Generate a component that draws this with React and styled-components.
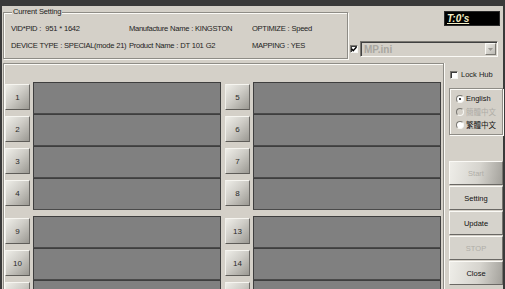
import styled, { createGlobalStyle } from "styled-components";

/** Global page reset */

const GlobalStyle = createGlobalStyle`
  html, body {
    margin: 0;
    padding: 0;
    background: #3a3a3a;
    overflow: hidden;
  }
  body {
    width: 505px;
    height: 289px;
    font-family: "Liberation Sans", Arial, sans-serif;
  }
`;

/** Window frame */

const Screen = styled.div`
  width: 505px;
  height: 289px;
  box-sizing: border-box;
  padding: 6px 2px 0 2px;
  background: #3a3a3a;
  overflow: hidden;
`;

const Dialog = styled.div`
  height: 100%;
  box-sizing: border-box;
  padding: 1px 0 0 1px;
  background: #d4d0c8;
  display: flex;
  flex-direction: column;
`;

const TopRow = styled.div`
  display: flex;
`;

const GroupBox = styled.fieldset`
  margin: 0;
  box-sizing: border-box;
  border: 1px solid #8e8c86;
  box-shadow: 1px 1px 0 #fbfaf6, inset 1px 1px 0 #fbfaf6;
  min-width: 0;
`;

const Legend = styled.legend`
  position: relative;
  margin-left: 1px;
  padding: 0 1px;
  font-size: 7.5px;
  letter-spacing: -0.15px;
  line-height: 10px;
  color: #222;
  background: #d4d0c8;
`;

const SettingBox = styled(GroupBox)`
  width: 345px;
  height: 52px;
  padding: 0 0 0 7px;
`;

const InfoGrid = styled.div`
  display: grid;
  grid-template-columns: 118px 123px 1fr;
  grid-auto-rows: 17px;
  align-items: center;
  margin-top: 3px;
  font-size: 7.6px;
  letter-spacing: -0.3px;
  word-spacing: 0.3px;
  color: #222;
  white-space: nowrap;
`;

const TopRight = styled.div`
  flex: 1;
  display: flex;
  flex-direction: column;
  align-items: flex-end;
`;

const Timer = styled.div`
  margin: 4px 3px 0 0;
  width: 56px;
  height: 15px;
  box-sizing: border-box;
  padding-left: 2px;
  background: #000;
  border: 1px solid #2a2a2a;
  color: #f4f0c8;
  font-size: 10px;
  font-style: italic;
  font-weight: bold;
  line-height: 13px;
  text-decoration: underline;
`;

const ComboRow = styled.div`
  margin: 15px 5px 0 0;
  display: flex;
  align-items: center;
  gap: 2px;
`;

const CheckBox = styled.span`
  width: 8px;
  height: 8px;
  box-sizing: border-box;
  display: flex;
  align-items: center;
  justify-content: center;
  background: #fff;
  border: 1px solid;
  border-color: #7a7872 #f6f6f2 #f6f6f2 #7a7872;
  box-shadow: inset 1px 1px 0 #3c3c3c;
  flex-shrink: 0;
`;

const Combo = styled.div`
  width: 138px;
  height: 16px;
  box-sizing: border-box;
  display: flex;
  align-items: center;
  justify-content: space-between;
  padding: 0 1px 0 3px;
  border: 1px solid;
  border-color: #7a7872 #fbfaf6 #fbfaf6 #7a7872;
  box-shadow: inset 1px 1px 0 #404040;
  background: #d4d0c8;
  color: #a8a6a0;
  font-size: 10px;
  font-weight: bold;
`;

const ComboArrow = styled.span`
  width: 11px;
  height: 12px;
  box-sizing: border-box;
  display: flex;
  align-items: center;
  justify-content: center;
  border: 1px solid;
  border-color: #fbfaf6 #7a7872 #7a7872 #fbfaf6;
  background: linear-gradient(135deg, #eceae4, #bcbab4);
`;

/** Main area */

const MainRow = styled.div`
  flex: 1;
  display: flex;
  margin-top: 4px;
  min-height: 0;
`;

const PortBox = styled.div`
  width: 441px;
  box-sizing: border-box;
  border: 1px solid #8e8c86;
  border-bottom: none;
  box-shadow: inset 1px 1px 0 #fbfaf6, 1px 0 0 #fbfaf6;
  padding: 18px 1px 0 1px;
  display: flex;
  flex-direction: column;
  gap: 6px;
`;

const Block = styled.div`
  display: flex;
  gap: 4px;
`;

const PortColumn = styled.div`
  display: flex;
  flex-direction: column;
`;

const Port = styled.div`
  height: 32px;
  display: flex;
  align-items: flex-start;
  gap: 3px;
`;

const PortButton = styled.div`
  margin-top: 2px;
  width: 25px;
  height: 26px;
  box-sizing: border-box;
  display: flex;
  align-items: center;
  justify-content: center;
  border: 1px solid;
  border-color: #f6f5f0 #6c6a66 #5e5c58 #f0efea;
  background: linear-gradient(135deg, #eeede8 0%, #cfcdc7 45%, #9a9892 100%);
  color: #2a2a2a;
  font-size: 8px;
`;

const StatusBar = styled.div`
  width: 188px;
  height: 32px;
  box-sizing: border-box;
  border: 1px solid #3e3e3e;
  border-bottom-color: #4a4a4a;
  background: #808080;
`;

const SideColumn = styled.div`
  width: 54px;
  margin-left: 5px;
  display: flex;
  flex-direction: column;
`;

const CheckRow = styled.label`
  margin: 7px 0 0 1px;
  display: flex;
  align-items: center;
  gap: 3px;
  font-size: 7.5px;
  color: #222;
`;

const LangBox = styled.div`
  margin-top: 9px;
  height: 47px;
  box-sizing: border-box;
  border: 1px solid #8e8c86;
  box-shadow: inset 1px 1px 0 #fbfaf6, 1px 1px 0 #fbfaf6;
  padding: 3px 0 0 6px;
  display: flex;
  flex-direction: column;
`;

const RadioRow = styled.div`
  height: 13px;
  display: flex;
  align-items: center;
  gap: 2px;
  font-family: "Liberation Sans", "Noto Sans CJK TC", sans-serif;
  font-size: 7.5px;
  color: ${(p) => (p.disabled ? "#aeaca6" : "#111")};
`;

const Radio = styled.span`
  position: relative;
  width: 8px;
  height: 8px;
  box-sizing: border-box;
  border-radius: 50%;
  border: 1px solid;
  border-color: #7a7872 #f6f6f2 #f6f6f2 #7a7872;
  background: ${(p) => (p.disabled ? "#d4d0c8" : "#fff")};
  flex-shrink: 0;

  &::after {
    content: "";
    display: ${(p) => (p.checked ? "block" : "none")};
    position: absolute;
    left: 2px;
    top: 2px;
    width: 2px;
    height: 2px;
    border-radius: 50%;
    background: #000;
  }
`;

const ButtonStack = styled.div`
  margin-top: 26px;
  display: flex;
  flex-direction: column;
  gap: 1px;
`;

const ActionButton = styled.div`
  height: 24px;
  box-sizing: border-box;
  display: flex;
  align-items: center;
  justify-content: center;
  border: 1px solid;
  border-color: #fbfaf6 #76746e #6a6864 #fbfaf6;
  background: ${(p) =>
    p.shaded
      ? "linear-gradient(100deg, #eeede8 0%, #d6d4ce 55%, #a4a29c 100%)"
      : "#d6d3cc"};
  color: ${(p) => (p.disabled ? "#b0aea8" : "#111")};
  font-size: 7.5px;
`;

/** Data */

const BLOCKS = [
  [
    [1, 2, 3, 4],
    [5, 6, 7, 8],
  ],
  [
    [9, 10, 11, 12],
    [13, 14, 15, 16],
  ],
];

const ACTIONS = [
  { label: "Start", shaded: true, disabled: true },
  { label: "Setting" },
  { label: "Update" },
  { label: "STOP", disabled: true },
  { label: "Close", shaded: true },
];

function CheckMark() {
  return (
    <svg width="6" height="6" viewBox="0 0 6 6">
      <polyline points="0.5,2.8 2.2,4.6 5.5,1" fill="none" stroke="#000" strokeWidth="1.4" />
    </svg>
  );
}

function DownArrow() {
  return (
    <svg width="5" height="3" viewBox="0 0 5 3">
      <polygon points="0,0 5,0 2.5,3" fill="#9a9892" />
    </svg>
  );
}

function App() {
  return (
    <>
      <GlobalStyle />
      <Screen>
        <Dialog>
          <TopRow>
            <SettingBox>
              <Legend>Current Setting</Legend>
              <InfoGrid>
                <span>VID*PID :&nbsp; 951 * 1642</span>
                <span>Manufacture Name : KINGSTON</span>
                <span>OPTIMIZE : Speed</span>
                <span>DEVICE TYPE : SPECIAL(mode 21)</span>
                <span>Product Name : DT 101 G2</span>
                <span>MAPPING : YES</span>
              </InfoGrid>
            </SettingBox>
            <TopRight>
              <Timer>T:0's</Timer>
              <ComboRow>
                <CheckBox>
                  <CheckMark />
                </CheckBox>
                <Combo>
                  <span>MP.ini</span>
                  <ComboArrow>
                    <DownArrow />
                  </ComboArrow>
                </Combo>
              </ComboRow>
            </TopRight>
          </TopRow>

          <MainRow>
            <PortBox>
              {BLOCKS.map((block, i) => (
                <Block key={i}>
                  {block.map((col, j) => (
                    <PortColumn key={j}>
                      {col.map((n) => (
                        <Port key={n}>
                          <PortButton>{n}</PortButton>
                          <StatusBar />
                        </Port>
                      ))}
                    </PortColumn>
                  ))}
                </Block>
              ))}
            </PortBox>

            <SideColumn>
              <CheckRow>
                <CheckBox />
                Lock Hub
              </CheckRow>
              <LangBox>
                <RadioRow>
                  <Radio checked />
                  English
                </RadioRow>
                <RadioRow disabled>
                  <Radio disabled />
                  簡體中文
                </RadioRow>
                <RadioRow>
                  <Radio />
                  繁體中文
                </RadioRow>
              </LangBox>
              <ButtonStack>
                {ACTIONS.map((a) => (
                  <ActionButton key={a.label} shaded={a.shaded} disabled={a.disabled}>
                    {a.label}
                  </ActionButton>
                ))}
              </ButtonStack>
            </SideColumn>
          </MainRow>
        </Dialog>
      </Screen>
    </>
  );
}

export default App;
